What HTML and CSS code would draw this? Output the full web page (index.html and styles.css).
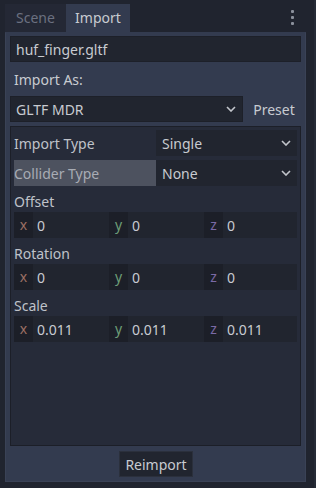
FILE: index.html
```html
<!DOCTYPE html>
<html>
<head>
<meta charset="utf-8">
<link rel="stylesheet" href="styles.css">
</head>
<body>
<div class="dock">
  <div class="tabbar">
    <div class="tab">Scene</div>
    <div class="tab active">Import</div>
    <div class="spacer"></div>
    <div class="menu"><span></span><span></span><span></span></div>
  </div>
  <div class="panel">
    <div class="field">huf_finger.gltf</div>
    <div class="label">Import As:</div>
    <div class="asrow">
      <div class="select wide"><span>GLTF MDR</span><svg class="chev" width="10" height="6" viewBox="0 0 10 6"><path d="M1 1 L5 5 L9 1" fill="none" stroke="#c3c6cc" stroke-width="1.6"/></svg></div>
      <div class="preset">Preset</div>
    </div>
    <div class="inspector">
      <div class="prop">
        <div class="pname">Import Type</div>
        <div class="select pval"><span>Single</span><svg class="chev" width="10" height="6" viewBox="0 0 10 6"><path d="M1 1 L5 5 L9 1" fill="none" stroke="#c3c6cc" stroke-width="1.6"/></svg></div>
      </div>
      <div class="prop">
        <div class="pname hl">Collider Type</div>
        <div class="select pval"><span>None</span><svg class="chev" width="10" height="6" viewBox="0 0 10 6"><path d="M1 1 L5 5 L9 1" fill="none" stroke="#c3c6cc" stroke-width="1.6"/></svg></div>
      </div>
      <div class="group">
        <div class="gname">Offset</div>
        <div class="vec">
          <div class="comp"><span class="axis ax">x</span><span class="num">0</span></div>
          <div class="comp"><span class="axis ay">y</span><span class="num">0</span></div>
          <div class="comp"><span class="axis az">z</span><span class="num">0</span></div>
        </div>
      </div>
      <div class="group">
        <div class="gname">Rotation</div>
        <div class="vec">
          <div class="comp"><span class="axis ax">x</span><span class="num">0</span></div>
          <div class="comp"><span class="axis ay">y</span><span class="num">0</span></div>
          <div class="comp"><span class="axis az">z</span><span class="num">0</span></div>
        </div>
      </div>
      <div class="group">
        <div class="gname">Scale</div>
        <div class="vec">
          <div class="comp"><span class="axis ax">x</span><span class="num">0.011</span></div>
          <div class="comp"><span class="axis ay">y</span><span class="num">0.011</span></div>
          <div class="comp"><span class="axis az">z</span><span class="num">0.011</span></div>
        </div>
      </div>
    </div>
    <div class="btnrow"><div class="button">Reimport</div></div>
  </div>
</div>
</body>
</html>
```
FILE: styles.css
```css
* { box-sizing: border-box; }
html, body { margin: 0; padding: 0; }
body {
  background: #20242f;
  font-family: "Noto Sans", "DejaVu Sans", sans-serif;
  font-size: 14px;
  color: #c8cbd1;
  width: 316px;
  height: 488px;
  overflow: hidden;
}
.dock { width: 316px; height: 488px; border-right: 2px solid #262b37; }
.tabbar {
  display: flex;
  align-items: stretch;
  height: 32px;
  padding: 4px 0 0 5px;
}
.tab {
  width: 61px;
  display: flex;
  align-items: center;
  justify-content: center;
  color: #6b7080;
  background: #242835;
  padding-bottom: 1px;
}
.tab.active {
  width: 64px;
  margin-left: 0;
  background: #333b4f;
  color: #c8cbd1;
}
.spacer { flex: 1; }
.menu {
  width: 22px;
  margin-right: 11px;
  display: flex;
  flex-direction: column;
  align-items: center;
  gap: 3px;
  padding-top: 6px;
}
.menu span {
  width: 3px;
  height: 3px;
  background: #8b909c;
  border-radius: 1px;
}
.panel {
  margin-left: 5px;
  width: 301px;
  height: 450px;
  background: #333b4f;
  border: 1px solid #3a4256;
  border-top-color: #333b4f;
  padding: 3px 4px 4px 4px;
  display: flex;
  flex-direction: column;
  gap: 4px;
}
.field {
  height: 26px;
  background: #21252f;
  border: 1px solid #1d2029;
  padding: 0 5px;
  display: flex;
  align-items: center;
}
.label {
  height: 26px;
  display: flex;
  align-items: center;
  padding-left: 4px;
}
.asrow {
  display: flex;
  gap: 4px;
  height: 26px;
}
.select {
  background: #21252f;
  display: flex;
  align-items: center;
  justify-content: space-between;
  padding: 0 6px 0 6px;
}
.select.wide { flex: 1; border: 1px solid #1d2029; padding-left: 5px; }
.chev { display: block; }
.preset {
  width: 54px;
  display: flex;
  align-items: center;
  justify-content: center;
}
.inspector {
  height: 320px;
  background: #262b39;
  border: 1px solid #1c1f28;
  padding: 3px;
  display: flex;
  flex-direction: column;
  gap: 4px;
}
.prop {
  display: grid;
  grid-template-columns: 142px 1fr;
  height: 26px;
}
.pname {
  display: flex;
  align-items: center;
  color: #bfc2c9;
}
.pname.hl { background: #4d525f; color: #a8acb4; }
.pval { padding-right: 6px; }
.group { display: flex; flex-direction: column; }
.gname {
  height: 22px;
  display: flex;
  align-items: center;
  color: #bfc2c9;
}
.vec {
  display: grid;
  grid-template-columns: 95px 95px 1fr;
  height: 26px;
}
.comp {
  display: flex;
  align-items: center;
  background: #21252f;
}
.axis {
  width: 19px;
  height: 100%;
  background: #1c1f28;
  display: flex;
  align-items: center;
  justify-content: center;
  padding-bottom: 1px;
}
.ax { color: #9c7064; }
.ay { color: #6d9d77; }
.az { color: #7b6aa6; }
.num { padding-left: 4px; }
.btnrow {
  display: flex;
  justify-content: center;
  margin-top: 1px;
  padding-left: 1px;
}
.button {
  width: 74px;
  height: 26px;
  background: #21252f;
  border: 1px solid #2b303c;
  display: flex;
  align-items: center;
  justify-content: center;
}
```
